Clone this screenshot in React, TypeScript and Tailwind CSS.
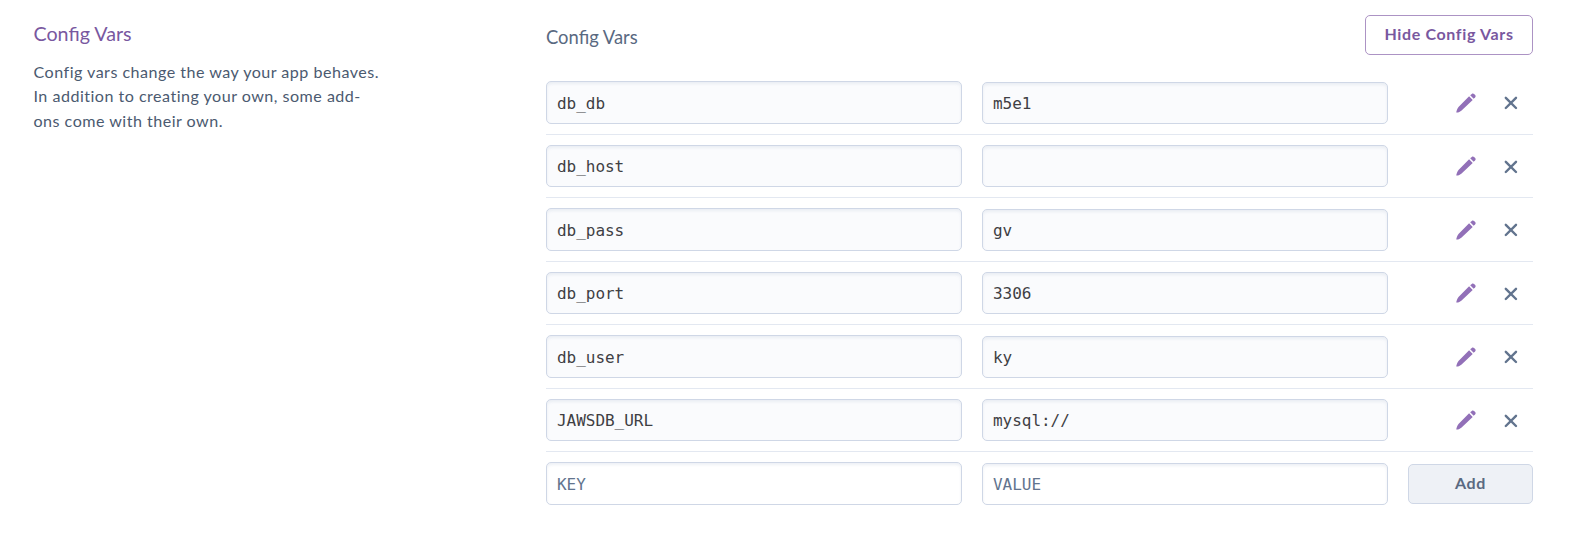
import clsx from 'clsx';

type ConfigVar = { name: string; value: string };

const CONFIG_VARS: ConfigVar[] = [
  { name: 'db_db', value: 'm5e1' },
  { name: 'db_host', value: '' },
  { name: 'db_pass', value: 'gv' },
  { name: 'db_port', value: '3306' },
  { name: 'db_user', value: 'ky' },
  { name: 'JAWSDB_URL', value: 'mysql://' },
];

function PencilIcon() {
  return (
    <svg width="20" height="20" viewBox="0 0 20 20" fill="#9270b8" aria-hidden="true">
      <path d="M13.1 3.3 16.7 6.9 5.6 17.4 C4.2 18.7 2.4 19.3 .8 19.6 C.4 19.7.1 19.4.3 19 C.8 17.3 1.2 15.6 2.5 14.1Z" />
      <path d="M14.2 2.3 15.8.9 C16.5.3 17.4.3 18.1 1 L19.1 2 C19.8 2.7 19.8 3.6 19.2 4.3 L17.7 5.8Z" />
    </svg>
  );
}

function CloseIcon() {
  return (
    <svg width="14" height="14" viewBox="0 0 14 14" fill="none" stroke="#62748e" strokeWidth="2.4" strokeLinecap="round" aria-hidden="true">
      <path d="M1.8 1.8 12 12M12 1.8 1.8 12" />
    </svg>
  );
}

function Field({ text, className, placeholder = false }: { text: string; className: string; placeholder?: boolean }) {
  return (
    <div
      className={clsx(
        'flex items-center rounded-[5px] border border-[#cfd7e6] px-[10px] pt-[2px] font-["DejaVu_Sans_Mono",monospace] text-[16px] tracking-[-0.03px] shadow-[inset_0_2px_3px_rgba(207,215,230,0.38)]',
        placeholder ? 'bg-white text-[#62748e]' : 'bg-[#fafbfd] text-[#3f3f44]',
        className,
      )}
    >
      {text}
    </div>
  );
}

export default function App() {
  return (
    <main className="flex h-[552px] w-[1577px] bg-white pl-[33.5px] font-['Lato',sans-serif]">
      <aside className="w-[512.5px] shrink-0 pt-[20px]">
        <h2 className="text-[19.7px] leading-[28px] text-[#79589f]">Config Vars</h2>
        <p className="mt-[12px] text-[16.1px] leading-[24.3px] tracking-[0.48px] whitespace-nowrap text-[#4b5a70]">
          Config vars change the way your app behaves.
          <br />
          In addition to creating your own, some add-
          <br />
          ons come with their own.
        </p>
      </aside>

      <section className="w-[987px] pt-[15px]">
        <header className="flex h-[56px] items-start justify-between">
          <h3 className="mt-[7.5px] text-[18.4px] leading-[28px] text-[#596981]">Config Vars</h3>
          <button className="flex h-[40px] w-[168px] items-center justify-center rounded-[5px] border border-[#ac93c4] pb-[2px] text-[16px] font-bold tracking-[0.65px] whitespace-nowrap text-[#79589f]">
            Hide Config Vars
          </button>
        </header>

        <ul>
          {CONFIG_VARS.map((item, i) => (
            <li key={item.name} className="flex items-end border-b border-[#e3e8f1] py-[10px]">
              <Field text={item.name} className={clsx('w-[416px]', i % 2 === 0 ? 'h-[43px]' : 'h-[42px]')} />
              <Field text={item.value} className="ml-[20px] h-[42px] w-[406px]" />
              <div className="ml-[68px] flex h-[42px] items-center">
                <button className="mb-[1px]"><PencilIcon /></button>
                <button className={clsx('ml-[28px]', i % 2 === 1 && 'mt-[2px]')}><CloseIcon /></button>
              </div>
            </li>
          ))}
        </ul>
        <form className="flex items-end pt-[10px]">
          <Field text="KEY" placeholder className="h-[43px] w-[416px]" />
          <Field text="VALUE" placeholder className="ml-[20px] h-[42px] w-[406px]" />
          <button type="button" className="mb-[1px] ml-[20px] flex h-[40px] w-[125px] items-center justify-center rounded-[5px] border border-[#cfd7e6] bg-[#eef1f6] pb-[2px] text-[16px] font-bold tracking-[0.65px] text-[#596981]">
            Add
          </button>
        </form>
      </section>
    </main>
  );
}
